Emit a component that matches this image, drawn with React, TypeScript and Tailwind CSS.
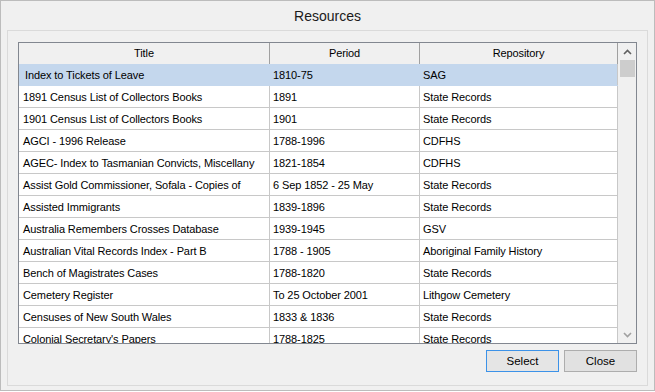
import React from "react";

type Row = { title: string; period: string; repo: string };

const rows: Row[] = [
  { title: "Index to Tickets of Leave", period: "1810-75", repo: "SAG" },
  { title: "1891 Census List of Collectors Books", period: "1891", repo: "State Records" },
  { title: "1901 Census List of Collectors Books", period: "1901", repo: "State Records" },
  { title: "AGCI - 1996 Release", period: "1788-1996", repo: "CDFHS" },
  { title: "AGEC- Index to Tasmanian Convicts, Miscellany", period: "1821-1854", repo: "CDFHS" },
  { title: "Assist Gold Commissioner, Sofala - Copies of", period: "6 Sep 1852 - 25 May", repo: "State Records" },
  { title: "Assisted Immigrants", period: "1839-1896", repo: "State Records" },
  { title: "Australia Remembers Crosses Database", period: "1939-1945", repo: "GSV" },
  { title: "Australian Vital Records Index - Part B", period: "1788 - 1905", repo: "Aboriginal Family History" },
  { title: "Bench of Magistrates Cases", period: "1788-1820", repo: "State Records" },
  { title: "Cemetery Register", period: "To 25 October 2001", repo: "Lithgow Cemetery" },
  { title: "Censuses of New South Wales", period: "1833 & 1836", repo: "State Records" },
  { title: "Colonial Secretary's Papers", period: "1788-1825", repo: "State Records" },
];

export default function App() {
  return (
    <div
      className="w-[655px] h-[391px] bg-[#f0f0f0] border border-[#bcbcbc] flex flex-col text-black"
      style={{ fontFamily: '"Liberation Sans", Arial, sans-serif' }}
    >
      <div className="h-[29px] flex items-center justify-center text-[14px] text-[#1a1a1a] pt-[2px]">
        Resources
      </div>

      <div className="mx-[6px] flex-1 mb-[4px] border border-[#dadada] flex flex-col pt-[11px] px-[10px]">
        <div className="h-[302px] border border-[#828790] bg-white flex text-[11px] tracking-[-0.1px]">
          <div className="flex-1 flex flex-col overflow-hidden">
            <div className="h-[21px] shrink-0 flex bg-[#f0f0f0]">
              <div className="w-[251px] border-r border-[#a0a0a0] flex items-center justify-center">Title</div>
              <div className="w-[150px] border-r border-[#a0a0a0] flex items-center justify-center">Period</div>
              <div className="w-[198px] border-r border-[#a0a0a0] flex items-center justify-center">Repository</div>
            </div>
            {rows.map((r, i) => (
              <div
                key={r.title}
                className={`h-[22px] shrink-0 flex border-b ${i === 0 ? "bg-[#c4d7ed] border-[#c4d7ed]" : "border-[#c8c8c8]"}`}
              >
                <div className={`w-[251px] border-r flex items-center pt-[1px] whitespace-nowrap overflow-hidden ${i === 0 ? "pl-[6px] border-[#c4d7ed]" : "pl-[4px] border-[#c8c8c8]"}`}>
                  {r.title}
                </div>
                <div className={`w-[150px] border-r flex items-center pt-[1px] pl-[3px] whitespace-nowrap overflow-hidden ${i === 0 ? "border-[#c4d7ed]" : "border-[#c8c8c8]"}`}>
                  {r.period}
                </div>
                <div className="w-[198px] border-r border-[#c8c8c8] flex items-center pt-[1px] pl-[3px] whitespace-nowrap overflow-hidden">
                  {r.repo}
                </div>
              </div>
            ))}
          </div>

          <div className="w-[18px] shrink-0 bg-[#f0f0f0] flex flex-col items-center">
            <div className="h-[17px] w-full flex items-center justify-center">
              <svg width="9" height="6" viewBox="0 0 9 6">
                <path d="M1 5 L4.5 1.5 L8 5" fill="none" stroke="#606060" strokeWidth="1.6" />
              </svg>
            </div>
            <div className="w-[15px] h-[17px] bg-[#cdcdcd]" />
            <div className="flex-1" />
            <div className="h-[17px] w-full flex items-center justify-center">
              <svg width="9" height="6" viewBox="0 0 9 6">
                <path d="M1 1 L4.5 4.5 L8 1" fill="none" stroke="#a0a0a0" strokeWidth="1.6" />
              </svg>
            </div>
          </div>
        </div>

        <div className="flex justify-end gap-[5px] mt-[6px] text-[11.5px]">
          <button className="w-[73px] h-[22px] bg-[#e5e5e5] border border-[#3c92e8] flex items-center justify-center pt-[1px]">
            Select
          </button>
          <button className="w-[73px] h-[22px] bg-[#e1e1e1] border border-[#adadad] flex items-center justify-center pt-[1px]">
            Close
          </button>
        </div>
      </div>
    </div>
  );
}
